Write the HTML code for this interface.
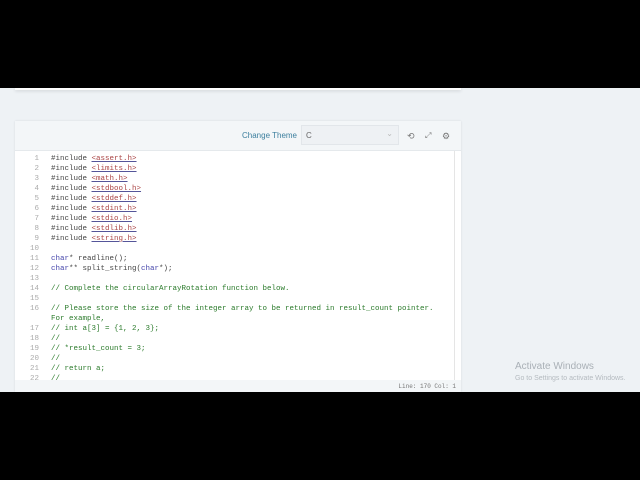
<!DOCTYPE html>
<html><head><style>
html,body{margin:0;padding:0}
body{width:640px;height:480px;background:#000;position:relative;overflow:hidden;font-family:"Liberation Sans",sans-serif}
.bg{position:absolute;left:0;top:88px;width:640px;height:304px;background:#eef2f5}
.topcard{position:absolute;left:15px;top:88px;width:446px;height:2px;background:#fff;box-shadow:0 1px 3px rgba(0,0,0,.15)}
.card{position:absolute;left:15px;top:121px;width:446px;height:271px;background:#fff;box-shadow:0 0 2px rgba(0,0,0,.1)}
.hdr{position:absolute;left:0;top:0;width:446px;height:29px;background:#f3f6f8;border-bottom:1px solid #e5e9ec}
.ct{position:absolute;left:227px;top:10px;font-size:8px;color:#3c7f9e}
.sel{position:absolute;left:286px;top:4px;width:98px;height:20px;background:#eef1f4;border:1px solid #e2e6ea;font-size:8px;color:#666;box-sizing:border-box;padding:5px 0 0 4px}
.sel:after{content:"⌄";position:absolute;right:5px;top:3px;color:#bbb;font-size:8px}
.ic{position:absolute;top:10px;font-size:9px;color:#777}
.code{position:absolute;left:0;top:32px;width:440px;font-family:"Liberation Mono",monospace;font-size:7.5px;color:#444}
.l{position:absolute;left:0;height:10px;width:440px}
.n{position:absolute;left:12px;width:12px;text-align:right;color:#aaa}
.t{position:absolute;left:36px;white-space:pre}
.s{color:#a44;text-decoration:underline;text-decoration-color:#559}
.k{color:#44a}
.c{color:#2a7a2a}
.sb{position:absolute;right:0;top:30px;width:6px;height:230px;border-left:1px solid #e5e5e5}
.ft{position:absolute;left:0;top:259px;width:446px;height:12px;background:#f3f6f8;font-family:"Liberation Mono",monospace;font-size:6px;color:#777;text-align:right}
.aw{position:absolute;left:515px;top:361px;color:#a9b0b6;font-size:10px}
.aw2{position:absolute;left:515px;top:375px;color:#b5bbc0;font-size:7px}
</style></head><body>
<div class="bg"></div>
<div class="topcard"></div>
<div class="card">
<div class="hdr">
<div class="ct">Change Theme</div>
<div class="sel">C</div>
<div class="ic" style="left:392px">⟲</div>
<div class="ic" style="left:410px;font-size:8px">⤢</div>
<div class="ic" style="left:427px">⚙</div>
</div>
<div class="code">
<div class="l" style="top:2px"><span class="n">1</span><span class="t">#include <span class="s">&lt;assert.h&gt;</span></span></div>
<div class="l" style="top:12px"><span class="n">2</span><span class="t">#include <span class="s">&lt;limits.h&gt;</span></span></div>
<div class="l" style="top:22px"><span class="n">3</span><span class="t">#include <span class="s">&lt;math.h&gt;</span></span></div>
<div class="l" style="top:32px"><span class="n">4</span><span class="t">#include <span class="s">&lt;stdbool.h&gt;</span></span></div>
<div class="l" style="top:42px"><span class="n">5</span><span class="t">#include <span class="s">&lt;stddef.h&gt;</span></span></div>
<div class="l" style="top:52px"><span class="n">6</span><span class="t">#include <span class="s">&lt;stdint.h&gt;</span></span></div>
<div class="l" style="top:62px"><span class="n">7</span><span class="t">#include <span class="s">&lt;stdio.h&gt;</span></span></div>
<div class="l" style="top:72px"><span class="n">8</span><span class="t">#include <span class="s">&lt;stdlib.h&gt;</span></span></div>
<div class="l" style="top:82px"><span class="n">9</span><span class="t">#include <span class="s">&lt;string.h&gt;</span></span></div>
<div class="l" style="top:92px"><span class="n">10</span></div>
<div class="l" style="top:102px"><span class="n">11</span><span class="t"><span class="k">char</span>* readline();</span></div>
<div class="l" style="top:112px"><span class="n">12</span><span class="t"><span class="k">char</span>** split_string(<span class="k">char</span>*);</span></div>
<div class="l" style="top:122px"><span class="n">13</span></div>
<div class="l" style="top:132px"><span class="n">14</span><span class="t c">// Complete the circularArrayRotation function below.</span></div>
<div class="l" style="top:142px"><span class="n">15</span></div>
<div class="l" style="top:152px"><span class="n">16</span><span class="t c">// Please store the size of the integer array to be returned in result_count pointer.</span></div>
<div class="l" style="top:162px"><span class="t c">For example,</span></div>
<div class="l" style="top:172px"><span class="n">17</span><span class="t c">// int a[3] = {1, 2, 3};</span></div>
<div class="l" style="top:182px"><span class="n">18</span><span class="t c">//</span></div>
<div class="l" style="top:192px"><span class="n">19</span><span class="t c">// *result_count = 3;</span></div>
<div class="l" style="top:202px"><span class="n">20</span><span class="t c">//</span></div>
<div class="l" style="top:212px"><span class="n">21</span><span class="t c">// return a;</span></div>
<div class="l" style="top:222px"><span class="n">22</span><span class="t c">//</span></div>
</div>
<div class="sb"></div>
<div class="ft"><span style="position:relative;top:3px;right:5px">Line: 170 Col: 1</span></div>
</div>
<div class="aw">Activate Windows</div>
<div class="aw2">Go to Settings to activate Windows.</div>
</body></html>
